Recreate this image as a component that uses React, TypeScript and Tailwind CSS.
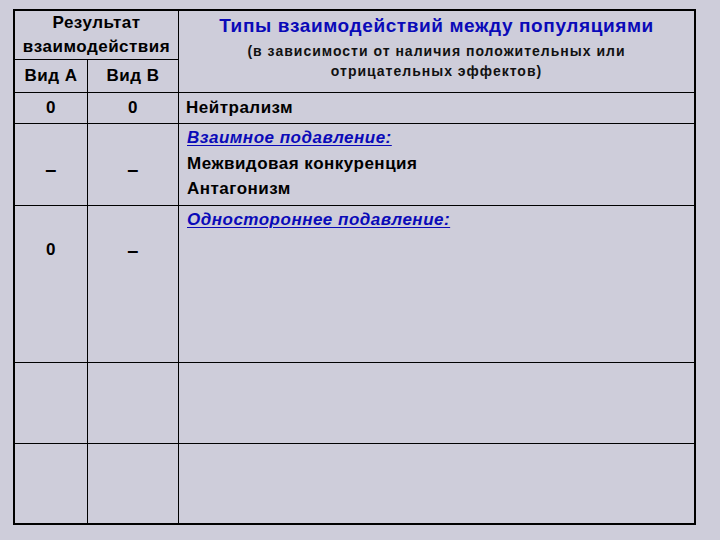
const FONT = "font-['Liberation_Sans',Arial,sans-serif]";
const CELL = "bg-[#cecdda]";
const BLUE = "text-[#0a0ab8]";

function Dash({ className = "" }: { className?: string }) {
  return (
    <div className={`${CELL} flex justify-center text-[20px] font-bold leading-[24px] ${className}`}>
      –
    </div>
  );
}

export default function App() {
  return (
    <div
      className={`min-h-[540px] w-[720px] bg-[#cecdda] pl-[13px] pt-[9px] ${FONT} text-[17px] font-bold tracking-[0.5px] text-black`}
    >
      <div className="w-[683px] border-2 border-black bg-black">
        <div className="grid grid-cols-[72px_90px_1fr] grid-rows-[48px_32px_30px_81px_156px_80px_79px] gap-px">
          <div className={`${CELL} col-span-2 flex flex-col items-center justify-center leading-[24px]`}>
            <span>Результат</span>
            <span>взаимодействия</span>
          </div>
          <div className={`${CELL} row-span-2 flex flex-col items-center pt-[3px]`}>
            <span className={`text-[19px] leading-[24px] tracking-[0.6px] ${BLUE}`}>
              Типы взаимодействий между популяциями
            </span>
            <span className="mt-[3px] text-center text-[14px] leading-[20px] tracking-[1px] text-[#111]">
              (в зависимости от наличия положительных или
              <br />
              отрицательных эффектов)
            </span>
          </div>
          <div className={`${CELL} flex items-center justify-center`}>Вид А</div>
          <div className={`${CELL} flex items-center justify-center`}>Вид В</div>

          <div className={`${CELL} flex items-center justify-center`}>0</div>
          <div className={`${CELL} flex items-center justify-center`}>0</div>
          <div className={`${CELL} flex items-center pl-[7px]`}>Нейтрализм</div>

          <Dash className="pt-[33px]" />
          <Dash className="pt-[33px]" />
          <div className={`${CELL} flex flex-col pl-[8px] pt-[1px] leading-[25.5px]`}>
            <span className={`italic underline underline-offset-2 ${BLUE}`}>Взаимное подавление:</span>
            <span>Межвидовая конкуренция</span>
            <span>Антагонизм</span>
          </div>

          <div className={`${CELL} flex justify-center pt-[32px] leading-[24px]`}>0</div>
          <Dash className="pt-[32px]" />
          <div className={`${CELL} pl-[8px] pt-[1px] leading-[25px]`}>
            <span className={`italic underline underline-offset-2 ${BLUE}`}>Одностороннее подавление:</span>
          </div>

          <div className={CELL} />
          <div className={CELL} />
          <div className={CELL} />

          <div className={CELL} />
          <div className={CELL} />
          <div className={CELL} />
        </div>
      </div>
    </div>
  );
}
